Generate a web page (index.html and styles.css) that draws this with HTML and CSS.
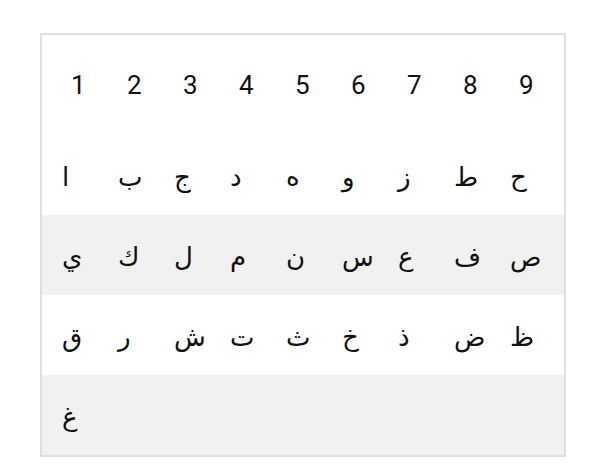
FILE: index.html
```html
<!DOCTYPE html>
<html lang="ar">
<head>
<meta charset="utf-8">
<link rel="stylesheet" href="styles.css">
</head>
<body>
<div class="board">
  <div class="row head">
    <span>1</span><span>2</span><span>3</span><span>4</span><span>5</span><span>6</span><span>7</span><span>8</span><span>9</span>
  </div>
  <div class="row letters">
    <span>ا</span><span>ب</span><span>ج</span><span>د</span><span>ه</span><span>و</span><span>ز</span><span>ط</span><span>ح</span>
  </div>
  <div class="row letters alt">
    <span>ي</span><span>ك</span><span>ل</span><span>م</span><span>ن</span><span>س</span><span>ع</span><span>ف</span><span>ص</span>
  </div>
  <div class="row letters">
    <span>ق</span><span>ر</span><span>ش</span><span>ت</span><span>ث</span><span>خ</span><span>ذ</span><span>ض</span><span>ظ</span>
  </div>
  <div class="row letters alt">
    <span>غ</span>
  </div>
</div>
</body>
</html>
```

FILE: styles.css
```css
html, body {
  margin: 0;
  padding: 0;
  background: #ffffff;
}

.board {
  margin: 33px 0 0 40px;
  width: 522px;
  border: 2px solid #e0e0e0;
  box-sizing: content-box;
  color: #111111;
}

.row {
  display: grid;
  grid-template-columns: repeat(9, 56px);
  align-items: center;
  height: 80px;
}

.row span {
  display: block;
}

.head {
  height: 100px;
  padding-left: 29px;
  font-family: Roboto, "Noto Sans", sans-serif;
  font-size: 26px;
  line-height: 1;
  align-items: start;
  padding-top: 37px;
  box-sizing: border-box;
}

.letters {
  padding-left: 20px;
  font-family: "DejaVu Sans", sans-serif;
  font-size: 26px;
  line-height: 1;
  padding-top: 4px;
  box-sizing: border-box;
}

.alt {
  background: #f1f1f1;
}
```
